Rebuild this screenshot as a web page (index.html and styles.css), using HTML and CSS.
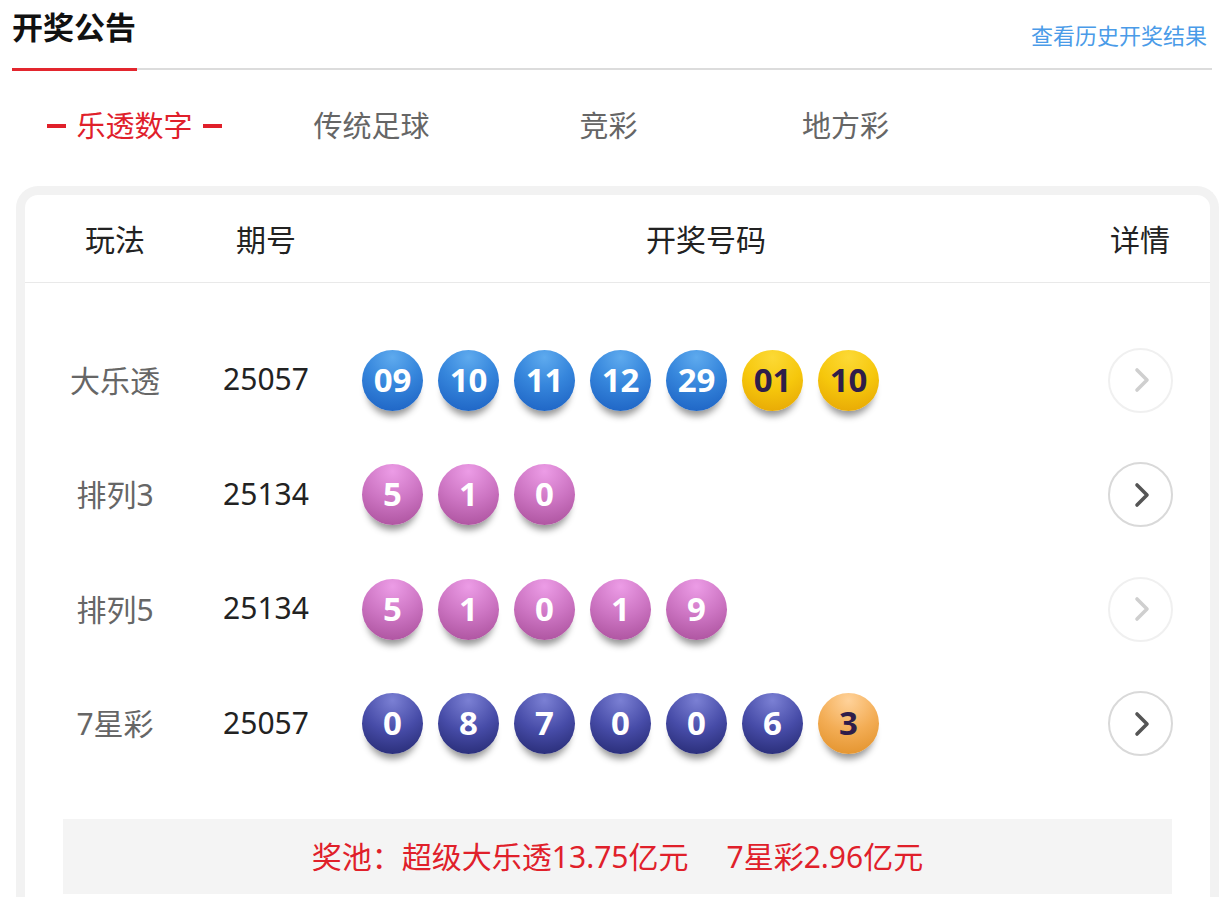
FILE: index.html
```html
<!DOCTYPE html>
<html lang="zh-CN">
<head>
    <meta charset="UTF-8">
    <meta name="viewport" content="width=device-width, initial-scale=1.0">
    <link rel="stylesheet" href="styles.css">
    <title>开奖公告</title>
</head>
<body>
    <div class="cabecera">
        <h1 class="titulo">开奖公告</h1>
        <a class="historial" href="#">查看历史开奖结果</a>
    </div>

    <div class="pestanas">
        <div class="pestana activa">乐透数字</div>
        <div class="pestana">传统足球</div>
        <div class="pestana">竞彩</div>
        <div class="pestana">地方彩</div>
    </div>

    <div class="tarjeta">
        <div class="fila encabezado">
            <div>玩法</div>
            <div>期号</div>
            <div>开奖号码</div>
            <div>详情</div>
        </div>

        <div class="filas">
            <div class="fila">
                <div class="juego">大乐透</div>
                <div class="periodo">25057</div>
                <div class="bolas">
                    <span class="bola azul">09</span>
                    <span class="bola azul">10</span>
                    <span class="bola azul">11</span>
                    <span class="bola azul">12</span>
                    <span class="bola azul">29</span>
                    <span class="bola amarilla">01</span>
                    <span class="bola amarilla">10</span>
                </div>
                <div class="detalle"><a class="flecha apagada" href="#"><svg width="28" height="28" viewBox="0 0 28 28"><path d="M9 4 L19 14 L9 24" /></svg></a></div>
            </div>

            <div class="fila">
                <div class="juego">排列3</div>
                <div class="periodo">25134</div>
                <div class="bolas">
                    <span class="bola rosa">5</span>
                    <span class="bola rosa">1</span>
                    <span class="bola rosa">0</span>
                </div>
                <div class="detalle"><a class="flecha" href="#"><svg width="28" height="28" viewBox="0 0 28 28"><path d="M9 4 L19 14 L9 24" /></svg></a></div>
            </div>

            <div class="fila">
                <div class="juego">排列5</div>
                <div class="periodo">25134</div>
                <div class="bolas">
                    <span class="bola rosa">5</span>
                    <span class="bola rosa">1</span>
                    <span class="bola rosa">0</span>
                    <span class="bola rosa">1</span>
                    <span class="bola rosa">9</span>
                </div>
                <div class="detalle"><a class="flecha apagada" href="#"><svg width="28" height="28" viewBox="0 0 28 28"><path d="M9 4 L19 14 L9 24" /></svg></a></div>
            </div>

            <div class="fila">
                <div class="juego">7星彩</div>
                <div class="periodo">25057</div>
                <div class="bolas">
                    <span class="bola marino">0</span>
                    <span class="bola marino">8</span>
                    <span class="bola marino">7</span>
                    <span class="bola marino">0</span>
                    <span class="bola marino">0</span>
                    <span class="bola marino">6</span>
                    <span class="bola naranja">3</span>
                </div>
                <div class="detalle"><a class="flecha" href="#"><svg width="28" height="28" viewBox="0 0 28 28"><path d="M9 4 L19 14 L9 24" /></svg></a></div>
            </div>
        </div>

        <div class="bote">奖池：超级大乐透13.75亿元<span class="hueco"></span>7星彩2.96亿元</div>
    </div>
</body>
</html>
```

FILE: styles.css
```css
* {
    margin: 0;
    padding: 0;
    box-sizing: border-box;
}
body {
    background-color: #fff;
    font-family: "Noto Sans", "Noto Sans CJK SC", sans-serif;
    color: #222;
}
a {text-decoration: none;}

/* cabecera */
.cabecera {
    display: flex;
    justify-content: space-between;
    width: 1200px;
    height: 70px;
    margin-left: 12px;
    border-bottom: 2px solid #dcdcdc;
}
.titulo {
    height: 71px;
    margin-bottom: -3px;
    padding: 7px 1px 0 0;
    font-size: 31px;
    line-height: 40px;
    font-weight: 700;
    color: #111;
    border-bottom: 3px solid #e3262e;
}
.historial {
    padding: 20px 5px 0 0;
    font-size: 22px;
    line-height: 30px;
    color: #4a9be8;
}

/* pestanas */
.pestanas {
    display: grid;
    grid-template-columns: repeat(5, 237px);
    margin-left: 16px;
    padding: 38px 0 42px;
}
.pestana {
    display: flex;
    justify-content: center;
    align-items: center;
    gap: 10px;
    font-size: 29px;
    line-height: 36px;
    color: #666;
}
.pestana.activa {color: #e0202a;}
.pestana.activa::before,
.pestana.activa::after {
    content: "";
    width: 19px;
    height: 4px;
    background-color: #e0202a;
}

/* tarjeta */
.tarjeta {
    width: 1203px;
    margin-left: 16px;
    border: 9px solid #f2f2f2;
    border-bottom: none;
    border-radius: 22px 22px 0 0;
    padding-bottom: 20px;
}
.fila {
    display: grid;
    grid-template-columns: 180px 122px 758px 110px;
    align-items: center;
    padding-right: 15px;
    height: 114.5px;
    font-size: 30px;
}
.fila > div {text-align: center;}
.encabezado {
    height: 88px;
    padding-bottom: 2px;
    border-bottom: 1px solid #e9e9e9;
    color: #222;
}
.filas {padding-top: 40px;}
.juego {color: #666; padding-bottom: 3px;}
.periodo {color: #222; padding-bottom: 3px;}

.fila > .bolas {
    display: flex;
    gap: 15px;
    padding-left: 35px;
    text-align: left;
}
.bola {
    display: flex;
    justify-content: center;
    align-items: center;
    width: 61px;
    height: 61px;
    border-radius: 50%;
    font-family: "Open Sans", "Noto Sans", sans-serif;
    font-size: 33px;
    font-weight: 700;
    color: #fff;
    padding-bottom: 2px;
    box-shadow: 0 10px 7px -5px rgba(0, 0, 0, 0.42);
}
.azul {background: radial-gradient(circle at 50% 12%, #5eaaee 0%, #3686dc 45%, #1a5ec0 100%);}
.amarilla {background: radial-gradient(circle at 50% 12%, #fcd935 0%, #f6c70c 50%, #e4a204 100%); color: #2f1d4a;}
.rosa {background: radial-gradient(circle at 50% 12%, #ec9ce6 0%, #cc74c2 50%, #a64c97 100%);}
.marino {background: radial-gradient(circle at 50% 12%, #7b80d4 0%, #474ca8 50%, #22266c 100%);}
.naranja {background: radial-gradient(circle at 50% 12%, #ffd29a 0%, #f3ad55 50%, #e08e25 100%); color: #2f1d4a;}

.detalle {
    display: flex;
    justify-content: center;
}
.flecha {
    display: flex;
    justify-content: center;
    align-items: center;
    width: 65px;
    height: 65px;
    border-radius: 50%;
    border: 2px solid #d9d9d9;
}
.flecha svg {fill: none; stroke: #555; stroke-width: 3.6; stroke-linecap: round; stroke-linejoin: round; margin-left: 3px;}
.flecha.apagada {border-color: #f0f0f0;}
.flecha.apagada svg {stroke: #cfcfcf;}

/* bote */
.bote {
    margin: 38px 38px 0;
    height: 75px;
    line-height: 75px;
    background-color: #f4f4f4;
    text-align: center;
    font-size: 30px;
    color: #e0202a;
}
.hueco {display: inline-block; width: 38px;}
```
